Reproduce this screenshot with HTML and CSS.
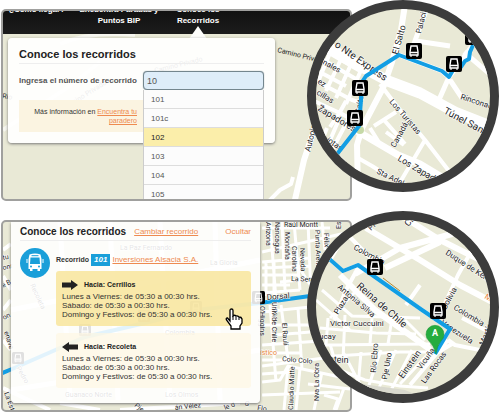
FILE: index.html
```html
<!DOCTYPE html>
<html lang="es">
<head>
<meta charset="utf-8">
<title>Conoce los recorridos</title>
<link rel="stylesheet" href="styles.css">
</head>
<body>
<svg class="defs" aria-hidden="true">
  <symbol id="stop" viewBox="0 0 16 16">
    <rect width="16" height="16" rx="2" fill="#000"/>
    <path d="M5 3h6l1 6v3H4V9z" fill="none" stroke="#fff" stroke-width="1.400"/>
    <path d="M4 9.500h8M5 13.800v-1.500M11 13.800v-1.500" fill="none" stroke="#fff" stroke-width="1.500"/>
  </symbol>
</svg>
<main>
  <section class="scene">
    <div class="frame">
      <svg class="map" viewBox="3 11 347 188" preserveAspectRatio="xMinYMin slice" aria-hidden="true">
        <g class="roads">
          <path d="M294 204L304 160L318 118" stroke-width="6"/>
          <path d="M268 202L280 190L291 184L293 177" stroke-width="4"/>
          <path d="M60 44Q90 31 135 35M3 130L70 86L100 62" stroke-width="4" opacity=".6"/>
        </g>
        <text transform="translate(277 52) rotate(14)">Camino Privado</text>
        <text class="mid" transform="translate(310 152) rotate(-76)">Autopista</text>
        <text transform="translate(2 98) rotate(10)">Río</text>
        <text transform="translate(65 110) rotate(-32)">Camino Privado</text>
        <text transform="translate(155 73) rotate(-14)">Camino Privado</text>
      </svg>
      <nav class="nav">
        <a href="#llegar">¿Cómo llegar?<br>&nbsp;</a>
        <a href="#paradas">Encuentra Paradas y Puntos BIP</a>
        <a href="#recorridos" class="current">Conoce los Recorridos</a>
      </nav>
      <form class="panel search">
        <h2>Conoce los recorridos</h2>
        <div class="field">
          <label for="numero">Ingresa el número de recorrido</label>
          <div class="combo">
            <input id="numero" type="text" value="10" autocomplete="off">
            <ul class="options">
              <li>101</li>
              <li>101c</li>
              <li class="selected">102</li>
              <li>103</li>
              <li>104</li>
              <li>105</li>
            </ul>
          </div>
        </div>
        <p class="hint">Más información en <a href="#paradero">Encuentra tu paradero</a></p>
      </form>
    </div>
    <div class="lens">
      <svg viewBox="316 9 174 174" aria-hidden="true">
        <g class="roads">
          <path d="M310 35L345 58L388 81L420 93L455 112L500 130" stroke-width="11"/>
          <path d="M405 5L401 30L392 62L383 88L362 128L357 145L358 190" stroke-width="6"/>
          <path d="M428 5L416 38L411 52M416 41L450 46M399 55L442 71L449 77L438 102M449 77L473 45M464 52L492 76M450 80L462 98" stroke-width="5"/>
          <path d="M357 131L398 155L420 164L450 182" stroke-width="7"/>
          <path d="M380 84L396 105L425 140L452 175M425 140L399 184M358 158L372 166L388 176M374 126L396 112M384 120L405 144M370 128L380 144M386 132L404 145" stroke-width="4"/>
          <path d="M318 82L352 100L362 103M312 100L342 114L360 124M316 70L346 86M332 48L318 82M342 57L326 91M352 62L336 98M362 68L346 104M324 50L362 72M320 58L356 79M346 101L340 112L330 127M350 116L332 150M340 117L328 145M327 128L318 150M315 135L345 163" stroke-width="4"/>
        </g>
        <circle cx="360" cy="130" r="4" fill="#c5d9a7"/>
        <g class="halo">
          <text class="mid" transform="translate(398 55) rotate(-75)">El Salto</text>
          <text transform="translate(421 34) rotate(-76)">Palacio</text>
          <text class="big" transform="translate(334 46) rotate(35)">o Nte Express</text>
          <text transform="translate(322 64) rotate(28)">nales</text>
          <text transform="translate(317 83) rotate(32)">ez</text>
          <text transform="translate(316 94) rotate(32)">cillas</text>
          <text transform="translate(318 109) rotate(28)">Z</text>
          <text class="mid" transform="translate(317 110) rotate(31)">Zapadores</text>
          <text transform="translate(326 141) rotate(35)">iotas</text>
          <text transform="translate(359 122) rotate(-80)">El Salto</text>
          <text transform="translate(389 102) rotate(49)">Los Turistas</text>
          <text transform="translate(395 148) rotate(-61)">Canadá</text>
          <text class="mid" transform="translate(397 160) rotate(31)">Los Zapadores</text>
          <text transform="translate(376 173) rotate(26)">Sta Adela</text>
          <text class="big" transform="translate(443 113) rotate(28)">Túnel San</text>
          <text transform="translate(460 99) rotate(18)">Rinconada</text>
        </g>
        <path class="route" d="M334 158L359 126L361 100L362 82L366 76L399 55L442 71L449 77L453 70L461 67L465 61L469 59L470 52L474 43"/>
        <use href="#stop" x="406" y="43" width="16" height="16"/>
        <use href="#stop" x="446" y="56" width="16" height="16"/>
        <use href="#stop" x="352" y="80" width="16" height="16"/>
        <use href="#stop" x="347" y="110" width="16" height="16"/>
        <use href="#stop" x="465" y="29" width="16" height="16"/>
      </svg>
    </div>
  </section>

  <section class="scene">
    <div class="frame">
      <svg class="map" viewBox="3 222 347 188" preserveAspectRatio="xMinYMin slice" aria-hidden="true">
        <g class="roads">
          <path d="M262 252L350 232M262 262L310 258M280 282L320 278M270 222L276 300M282 222L285 290M294 222L300 290M308 222L312 320M322 222L325 250M262 275H300M262 285H290M262 293L300 290M262 268L310 266M266 262V296M274 262V296M289 252L320 300M262 228H330" stroke-width="3"/>
          <path d="M262 312L320 306M262 345L335 340M262 366L340 356M262 382L280 380L288 366L345 378M270 305L276 382M281 305L288 360M298 308L302 370M262 325H310M275 335L310 332M288 366L284 410M300 368L296 410M322 372L314 410M262 395L340 392M308 384L350 389M324 395L338 399L334 410M344 388L336 410M262 353H300M262 360H290M262 374L290 372" stroke-width="3"/>
          <path d="M3 250L11 244M3 276L11 290M3 310L11 300M3 340L11 350M3 388L50 410M60 403L100 410M120 410L240 403" stroke-width="4"/>
          <path d="M60 222L70 400M110 222L118 400M160 222L170 400M215 222L220 400M11 310L260 260M11 390L260 350" stroke-width="5"/>
        </g>
        <path class="route" d="M0 374L12 369L85 337L145 323L196 310L260 303L310 296"/>
        <g class="halo">
          <text transform="translate(266 222) rotate(90)">Arizona</text>
          <text transform="translate(275 222) rotate(90)">Nancagua</text>
          <text transform="translate(285 232) rotate(90)">Montaña</text>
          <text transform="translate(292 246) rotate(90)">Carolina</text>
          <text transform="translate(300 248) rotate(88)">Nevada</text>
          <text transform="translate(315 230) rotate(88)">Punta Arenas</text>
          <text transform="translate(324 233) rotate(88)">Félix</text>
          <text transform="translate(341 229) rotate(-90)">Esmeralda</text>
          <text x="284" y="227">Raúl Montt</text>
          <text transform="translate(291 281) rotate(2)">La Serena</text>
          <text class="mid" transform="translate(267 300) rotate(-5)">Dorsal</text>
          <text transform="translate(277 320) rotate(-90)">Juan</text>
          <text transform="translate(260 306) rotate(90)">O'Higgins</text>
          <text transform="translate(272 302) rotate(90)">Univ de Chile</text>
          <text transform="translate(282 323) rotate(86)">El Raulí</text>
          <text transform="translate(282 361) rotate(5)">Colo Colo</text>
          <text transform="translate(293 410) rotate(-88)">Claudio Matte</text>
          <text transform="translate(319 401) rotate(-90)">Nva La Obra</text>
          <text class="accent" x="260" y="355">ístico</text>
          <text transform="translate(3 260) rotate(-12)">tu</text>
          <text transform="translate(3 270) rotate(-12)">onr</text>
          <text transform="translate(3 288) rotate(-28)">e B</text>
          <text transform="translate(4 320) rotate(-28)">on</text>
          <text transform="translate(4 332) rotate(72)">enave</text>
          <text transform="translate(4 393) rotate(70)">La Est</text>
          <text transform="translate(134 406) rotate(40)">Pje</text>
          <text transform="translate(175 410) rotate(-6)">án Vélez</text>
          <text transform="translate(225 410) rotate(-20)">le d</text>
          <text transform="translate(244 405) rotate(20)">G</text>
          <text transform="translate(257 410) rotate(8)">Flo</text>
          <text transform="translate(16 368) rotate(60)">Pedro</text>
          <text transform="translate(30 285) rotate(65)">Recoleta</text>
          <text x="120" y="250">La Paz Fernando</text>
          <text x="210" y="265">La Gloria</text>
          <text x="165" y="335">Colombia</text>
          <text x="65" y="397">Guanaco Norte</text>
          <text x="165" y="397">Los Olmos</text>
        </g>
        <use href="#stop" x="252" y="291" width="13" height="13"/>
        <use href="#stop" x="79" y="324" width="12" height="12"/>
        <use href="#stop" x="12" y="352" width="12" height="12"/>
        <use href="#stop" x="138" y="310" width="12" height="12"/>
        <use href="#stop" x="190" y="301" width="12" height="12"/>
      </svg>
      <div class="panel result">
        <header class="top">
          <h2>Conoce los recorridos</h2>
          <a href="#cambiar">Cambiar recorrido</a>
          <a class="hide" href="#ocultar">Ocultar</a>
        </header>
        <div class="body">
          <svg class="bus" viewBox="0 0 30 30" aria-hidden="true">
            <circle cx="15" cy="15" r="15" fill="#1a9fd9"/>
            <path d="M9.500 6.500Q15 4.500 20.500 6.500L21.500 11V21H20V23H17.500V21H12.500V23H10V21H8.500V11Z" fill="#fff"/>
            <path d="M7 11V15M23 11V15" stroke="#fff"/>
            <path d="M10.500 9.500H19.500L20 16H10Z" fill="#1a9fd9"/>
            <path d="M11.500 7.700H18.500" stroke="#1a9fd9" stroke-width="1"/>
            <circle cx="11" cy="18.500" r="1" fill="#1a9fd9"/>
            <circle cx="19" cy="18.500" r="1" fill="#1a9fd9"/>
          </svg>
          <div class="detail">
            <p class="line"><strong>Recorrido</strong> <em>101</em> <a href="#operador">Inversiones Alsacia S.A.</a></p>
            <article class="card active">
              <h3><svg viewBox="0 0 16 10" aria-hidden="true"><path d="M0 2.500H9V0L16 5L9 10V7.500H0Z"/></svg>Hacia: Cerrillos</h3>
              <p>Lunes a Viernes: de 05:30 a 00:30 hrs.<br>Sábado: de 05:30 a 00:30 hrs.<br>Domingo y Festivos: de 05:30 a 00:30 hrs.</p>
              <svg class="pointer" viewBox="0 0 18 22" aria-hidden="true"><path d="M5 13V2.500Q5 1 6.500 1T8 2.500V8Q9.500 6.500 11 8Q12.500 7.500 14 9Q16.500 9 17 11V15L15 18V21H6V18L1.500 12Q.500 10 2.500 10Z" fill="#fff" stroke="#000" stroke-width="1.300"/><path d="M8 8V12M11 8.500V12M14 9.500V12" stroke="#000"/></svg>
            </article>
            <article class="card">
              <h3><svg viewBox="0 0 16 10" aria-hidden="true"><path d="M16 2.500H7V0L0 5L7 10V7.500H16Z"/></svg>Hacia: Recoleta</h3>
              <p>Lunes a Viernes: de 05:30 a 00:30 hrs.<br>Sábado: de 05:30 a 00:30 hrs.<br>Domingo y Festivos: de 05:30 a 00:30 hrs.</p>
            </article>
          </div>
        </div>
      </div>
    </div>
    <div class="lens">
      <svg viewBox="316 220 174 174" aria-hidden="true">
        <g class="roads">
          <path d="M366 228L420 260L460 285L500 306M405 218L440 240L500 270M355 274L400 248L452 234L475 215M385 268L440 242" stroke-width="6"/>
          <path d="M330 260L343 271L358 265L422 310L450 329L435 354M330 260L345 235M348 235L380 268M472 250L458 275L442 310M420 285L406 305M462 318L495 335M448 340L455 345L490 352M448 340L410 385M358 268L346 290L334 320M435 354L452 344" stroke-width="4"/>
          <path d="M340 275L375 310L428 348L434 354" stroke-width="6"/>
          <path d="M322 290L352 316L420 318M320 328L376 333L416 334M316 345L430 344M328 318L326 345M345 315L343 360M372 318L370 344M392 318L388 344M318 357L400 352L430 352M330 344L342 385M343 352L362 388M361 352L358 388M381 350L368 388M396 350L378 390M412 350L390 392M335 368L365 380L400 386L428 388M430 352L400 384M405 320L425 340M316 300L350 330M355 292L330 318" stroke-width="3"/>
        </g>
        <path d="M362 384L405 390L424 398H350Z" fill="#d8d8ce"/>
        <g class="halo">
          <text transform="translate(353 249) rotate(28)">Colombia</text>
          <text transform="translate(371 231) rotate(-45)">Pl</text>
          <text class="mid" transform="translate(408 227) rotate(-45)">Chile</text>
          <text transform="translate(445 254) rotate(33)">Duque de Kent</text>
          <text class="big" transform="translate(356 287) rotate(41)">Reina de Chile</text>
          <text transform="translate(337 288) rotate(40)">Antonia Silva</text>
          <text transform="translate(338 315) rotate(-58)">Plaza</text>
          <text transform="translate(446 310) rotate(-62)">Bolivia</text>
          <text transform="translate(453 309) rotate(31)">Colombia</text>
          <text transform="translate(440 324) rotate(33)">Venezuela</text>
          <text class="accent" transform="translate(484 298) rotate(30)">Met</text>
          <text x="330" y="326">Victor Cuccuini</text>
          <text x="319" y="339">ucay</text>
          <text class="mid" transform="translate(329 362) rotate(3)">stein</text>
          <text transform="translate(333 376) rotate(-70)">Ein</text>
          <text transform="translate(376 373) rotate(-86)">Río Ebro</text>
          <text transform="translate(387 380) rotate(-80)">Pje Uno</text>
          <text class="mid" transform="translate(403 379) rotate(-55)">Einstein</text>
          <text transform="translate(421 370) rotate(-54)">Vicuña</text>
          <text transform="translate(425 384) rotate(-54)">Las Rocas</text>
          <text transform="translate(484 346) rotate(-68)">Martín</text>
        </g>
        <path class="route" d="M326 256L343 271L358 265L375 277L422 310L450 329L435 354"/>
        <path d="M383 278L400 291" stroke="#b48a35" stroke-width="1"/>
        <use href="#stop" x="367" y="259" width="16" height="16"/>
        <use href="#stop" x="430" y="303" width="16" height="16"/>
        <path d="M436 354Q434 346 429 341A9 9 0 1 1 441 341Q437 346 436 354Z" fill="#25ac3e" stroke="#169332" stroke-width=".5"/>
        <text class="pin" x="435" y="336" text-anchor="middle">A</text>
      </svg>
    </div>
  </section>
</main>
</body>
</html>
```
FILE: styles.css
```css
* { box-sizing: border-box; }

body, h2, h3, p, ul { margin: 0; padding: 0; }

body {
  background: #fff;
  color: #333;
  font: 8px/10px "Liberation Sans", Arial, sans-serif;
  overflow: hidden;
}

a { color: #ee8a50; }

.defs { position: absolute; width: 0; height: 0; }

.scene { position: relative; padding: 9px 147px 0 1px; }
.scene + .scene { margin-top: 10px; }

.frame {
  position: relative;
  overflow: hidden;
  border: 2px solid #a0a09e;
  border-radius: 5px;
  background: #e9e9d6;
}

.map { position: absolute; top: 0; left: 0; width: 100%; height: 100%; }

svg text { font: 8px Roboto, "Liberation Sans", sans-serif; fill: #222; }
svg .mid { font-size: 9px; }
svg .big { font-size: 10px; }
svg .accent { fill: #e8863a; }
svg .pin { font-size: 9px; font-weight: 700; fill: #fff; }
.halo text { stroke: #fff; stroke-width: 1px; paint-order: stroke; }
.map text { font-size: 7px; }
.map .mid { font-size: 8px; }
.roads { fill: none; stroke: #fff; stroke-linejoin: round; }
.route { fill: none; stroke: #129ee4; stroke-width: 4px; stroke-linejoin: round; }

.nav {
  position: relative;
  display: flex;
  align-items: flex-end;
  height: 23px;
  padding: 0 0 8px 6px;
  background: linear-gradient(#111, #1c1c1c);
  line-height: 11px;
}
.nav a {
  color: #fff;
  font-weight: 700;
  text-align: center;
  text-decoration: none;
  width: 56px;
}
.nav a:nth-child(2) { width: 84px; margin-left: 12px; }
.nav .current { position: relative; width: 56px; margin-left: 9px; }
.nav .current::after {
  content: "";
  position: absolute;
  top: 22px;
  left: 50%;
  margin-left: -9px;
  border: 9px solid transparent;
  border-top: 0;
  border-bottom: 13px solid #fdfdfb;
}

.panel { position: relative; border-radius: 4px; box-shadow: 0 1px 3px #777; }
h2 { color: #222; font-size: 11px; line-height: 14px; }

.search {
  margin: 4px 75px 56px 5px;
  padding: 9px 11px 11px;
  background: rgba(255, 255, 255, .92);
}
.field {
  display: flex;
  align-items: center;
  margin-top: 2px;
  padding-top: 7px;
  border-top: 1px solid #eee;
}
.field label { width: 124px; color: #555; font-weight: 700; white-space: nowrap; }
.combo { position: relative; flex: 1; }
.combo input {
  display: block;
  width: 100%;
  height: 19px;
  padding: 0 3px;
  border: 1px solid #74868e;
  border-radius: 4px;
  outline: 0;
  background: #deedf9;
  box-shadow: 0 0 1px #74868e;
  color: #555;
  font: 9px "Liberation Sans", Arial, sans-serif;
}
.options {
  position: absolute;
  z-index: 2;
  top: 100%;
  left: 0;
  right: 0;
  list-style: none;
  border: solid #ccc;
  border-width: 0 1px;
  background: #fcfcfc;
}
.options li {
  height: 19px;
  padding: 0 7px;
  border-bottom: 1px solid #ddd;
  color: #555;
  line-height: 19px;
}
.options .selected { background: #fbeeaa; color: #222; }
.hint {
  width: 124px;
  margin-top: 10px;
  padding: 7px 6px 7px 0;
  background: #fbf4e1;
  font-size: 7px;
  line-height: 9px;
  text-align: right;
}

.result {
  margin: 0 90px 7px 8px;
  padding: 2px 9px 15px;
  background: rgba(255, 255, 255, .88);
  border-radius: 0 0 4px 4px;
}
.top { display: flex; align-items: center; gap: 8px; height: 17px; border-bottom: 1px solid #eee; }
.top h2 { font-size: 10px; }
.top .hide { margin-left: auto; text-decoration: none; }
.body { display: flex; gap: 6px; padding-top: 7px; }
.bus { flex: none; width: 30px; height: 30px; }
.detail { flex: 1; }
.line { display: flex; align-items: center; gap: 2px; height: 23px; }
.line strong { font-size: 7px; }
.line em { padding: 1px 3px; background: #1a9fd9; color: #fff; font-weight: 700; }
.card {
  position: relative;
  padding: 7px 6px;
  border-radius: 3px;
  background: rgba(254, 247, 226, .7);
  line-height: 9px;
}
.card + .card { margin-top: 7px; }
.card.active { background: rgba(247, 227, 150, .8); }
.card h3 { display: flex; align-items: center; gap: 6px; height: 13px; margin-bottom: 1px; color: #222; font-size: 7px; }
.card h3 svg { width: 16px; height: 10px; fill: #222; }
.card .pointer { position: absolute; right: 8px; bottom: -4px; width: 18px; height: 22px; }

.lens {
  position: absolute;
  top: 0;
  right: 0;
  width: 192px;
  height: 192px;
  overflow: hidden;
  border: 9px solid #3c3c3c;
  border-radius: 50%;
  background: #e9e9d6;
}
.lens svg { display: block; width: 100%; height: 100%; }
```
